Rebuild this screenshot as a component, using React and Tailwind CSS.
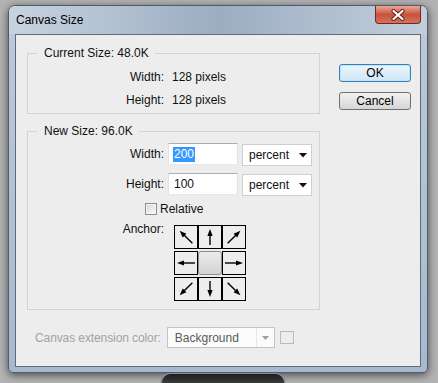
import React from 'react';

const Arrow = ({ angle, len }) => (
    <svg width="22" height="22" viewBox="0 0 22 22">
        <g transform={`rotate(${angle} 11 11)`}>
            <line x1="11" y1={11 + len} x2="11" y2={11 - len + 5} stroke="#000" strokeWidth="1.4" />
            <polygon points={`11,${11 - len} 8.4,${11 - len + 7} 13.6,${11 - len + 7}`} fill="#000" />
        </g>
    </svg>
);

const Cell = ({ angle, len }) => (
    <div className="w-[24px] h-[24px] border border-black bg-[#ededed] flex items-center justify-center">
        <Arrow angle={angle} len={len} />
    </div>
);

const Select = ({ value }) => (
    <div className="w-[70px] h-[22px] border border-[#cfcfcf] bg-white flex items-center justify-between pl-[6px] pr-[4px]">
        <span>{value}</span>
        <svg width="8" height="5" viewBox="0 0 8 5">
            <polygon points="0,0 8,0 4,4.5" fill="#111" />
        </svg>
    </div>
);

const App = () => {
    return (
        <div className="w-[438px] h-[383px] bg-[#b3b3b3] pt-[5px] pl-[8px] overflow-hidden font-['Liberation_Sans',Arial,sans-serif] text-[12px] text-[#111]">
            <div className="w-[420px] h-[368px] border border-[#4d5c70] rounded-t-[7px] rounded-b-[5px] bg-gradient-to-b from-[#bccadb] to-[#a9b9cd] shadow-[0_2px_9px_rgba(0,0,0,0.6)] flex flex-col">
                {/* title bar */}
                <div className="h-[28px] flex items-start justify-between pl-[7px] pr-[6px] rounded-t-[6px] bg-gradient-to-r from-[#c8d3df] via-[#9cadc2] to-[#c3cedb]">
                    <span className="self-center text-[12px] text-black">Canvas Size</span>
                    <div className="w-[46px] h-[18px] rounded-b-[4px] border border-t-0 border-[#6e2a22] bg-gradient-to-b from-[#e9a796] via-[#c8513b] to-[#d4735d] flex items-center justify-center">
                        <svg width="16" height="12" viewBox="0 0 16 12">
                            <path d="M3.5 2 L12.5 10 M12.5 2 L3.5 10" stroke="#5a2018" strokeWidth="4" strokeLinecap="round" />
                            <path d="M3.5 2 L12.5 10 M12.5 2 L3.5 10" stroke="#fff" strokeWidth="2.2" strokeLinecap="round" />
                        </svg>
                    </div>
                </div>

                {/* client area */}
                <div className="mx-[6px] h-[333px] border border-[#5d6b7d] bg-[#ededed] pt-[11px] pl-[11px] flex flex-col">
                    <div className="flex items-start">
                        <div className="w-[293px] flex flex-col">
                            <fieldset className="border border-[#cdd5db] pt-[10px] pb-[6px]">
                                <legend className="ml-[9px] pl-[7px] pr-[6px] leading-[14px]">Current Size: 48.0K</legend>
                                <div className="flex flex-col gap-[9px]">
                                    <div className="flex items-center gap-[8px] leading-[14px]">
                                        <span className="w-[136px] text-right">Width:</span>
                                        <span>128 pixels</span>
                                    </div>
                                    <div className="flex items-center gap-[8px] leading-[14px]">
                                        <span className="w-[136px] text-right">Height:</span>
                                        <span>128 pixels</span>
                                    </div>
                                </div>
                            </fieldset>

                            <fieldset className="mt-[10px] border border-[#cdd5db] pt-[5px] pb-[8px]">
                                <legend className="ml-[9px] pl-[7px] pr-[6px] leading-[14px]">New Size: 96.0K</legend>
                                <div className="flex flex-col">
                                    <div className="flex items-center h-[22px]">
                                        <span className="w-[136px] text-right">Width:</span>
                                        <div className="ml-[4px] w-[70px] h-[22px] border border-[#abadb3] border-b-[#e3e9ef] border-x-[#e2e3ea] bg-white flex items-center pl-[4px]">
                                            <span className="bg-[#3399ff] text-white px-[1px] leading-[15px]">200</span>
                                        </div>
                                        <div className="ml-[4px] mt-[2px]">
                                            <Select value="percent" />
                                        </div>
                                    </div>
                                    <div className="flex items-center h-[22px] mt-[8px]">
                                        <span className="w-[136px] text-right">Height:</span>
                                        <div className="ml-[4px] w-[70px] h-[22px] border border-[#abadb3] border-b-[#e3e9ef] border-x-[#e2e3ea] bg-white flex items-center pl-[5px]">
                                            <span>100</span>
                                        </div>
                                        <div className="ml-[4px] mt-[2px]">
                                            <Select value="percent" />
                                        </div>
                                    </div>
                                    <div className="flex items-center h-[14px] mt-[7px] pl-[117px] gap-[3px]">
                                        <div className="w-[12px] h-[12px] border border-[#8e8f8f] bg-gradient-to-br from-[#d9d9d9] to-[#fbfbfb] shadow-[inset_0_0_0_1px_#f4f4f4]" />
                                        <span>Relative</span>
                                    </div>
                                    <div className="flex items-start mt-[6px]">
                                        <span className="w-[136px] text-right leading-[14px]">Anchor:</span>
                                        <div className="ml-[10px] mt-[3px] grid grid-cols-3 gap-y-[2px] w-[72px]">
                                            <Cell angle={-45} len={9} />
                                            <Cell angle={0} len={8} />
                                            <Cell angle={45} len={9} />
                                            <Cell angle={-90} len={9} />
                                            <div className="w-[24px] h-[24px] rounded-[3px] border border-[#8c8c8c] bg-gradient-to-b from-[#ececec] to-[#d3d3d3]" />
                                            <Cell angle={90} len={9} />
                                            <Cell angle={-135} len={9} />
                                            <Cell angle={180} len={8} />
                                            <Cell angle={135} len={9} />
                                        </div>
                                    </div>
                                </div>
                            </fieldset>
                        </div>

                        <div className="ml-[19px] mt-[18px] flex flex-col gap-[10px]">
                            <button className="w-[72px] h-[18px] rounded-[3px] border border-[#3c7fb1] bg-gradient-to-b from-[#eaf5fc] to-[#cfe6f6] shadow-[inset_0_0_0_1px_#bfe3fa] text-black leading-[14px]">
                                OK
                            </button>
                            <button className="w-[72px] h-[18px] rounded-[3px] border border-[#707070] bg-gradient-to-b from-[#f2f2f2] to-[#d6d6d6] text-black leading-[14px]">
                                Cancel
                            </button>
                        </div>
                    </div>

                    <div className="flex items-center mt-[17px] pl-[8px]">
                        <span className="text-[#a3a3a3] whitespace-nowrap tracking-[-0.1px]">Canvas extension color:</span>
                        <div className="ml-[6px] w-[108px] h-[21px] border border-[#c3c3c3] bg-[#fbfbfb] flex items-stretch">
                            <span className="flex-1 flex items-center pl-[7px] text-[#5a5a5a]">Background</span>
                            <div className="w-[18px] border-l border-[#e6e6e6] flex items-center justify-center">
                                <svg width="7" height="4" viewBox="0 0 7 4">
                                    <polygon points="0,0 7,0 3.5,4" fill="#a0a0a0" />
                                </svg>
                            </div>
                        </div>
                        <div className="ml-[5px] w-[14px] h-[13px] border border-[#b9b9b9] bg-[#ededed]" />
                    </div>
                </div>
            </div>
            <div className="flex pl-[152px]">
                <div className="w-[126px] h-[10px] rounded-t-[10px] border-x-2 border-t border-[#8a8f96] bg-gradient-to-b from-[#1d1d1d] to-[#3a3a3a]" />
            </div>
        </div>
    );
};

export default App;
